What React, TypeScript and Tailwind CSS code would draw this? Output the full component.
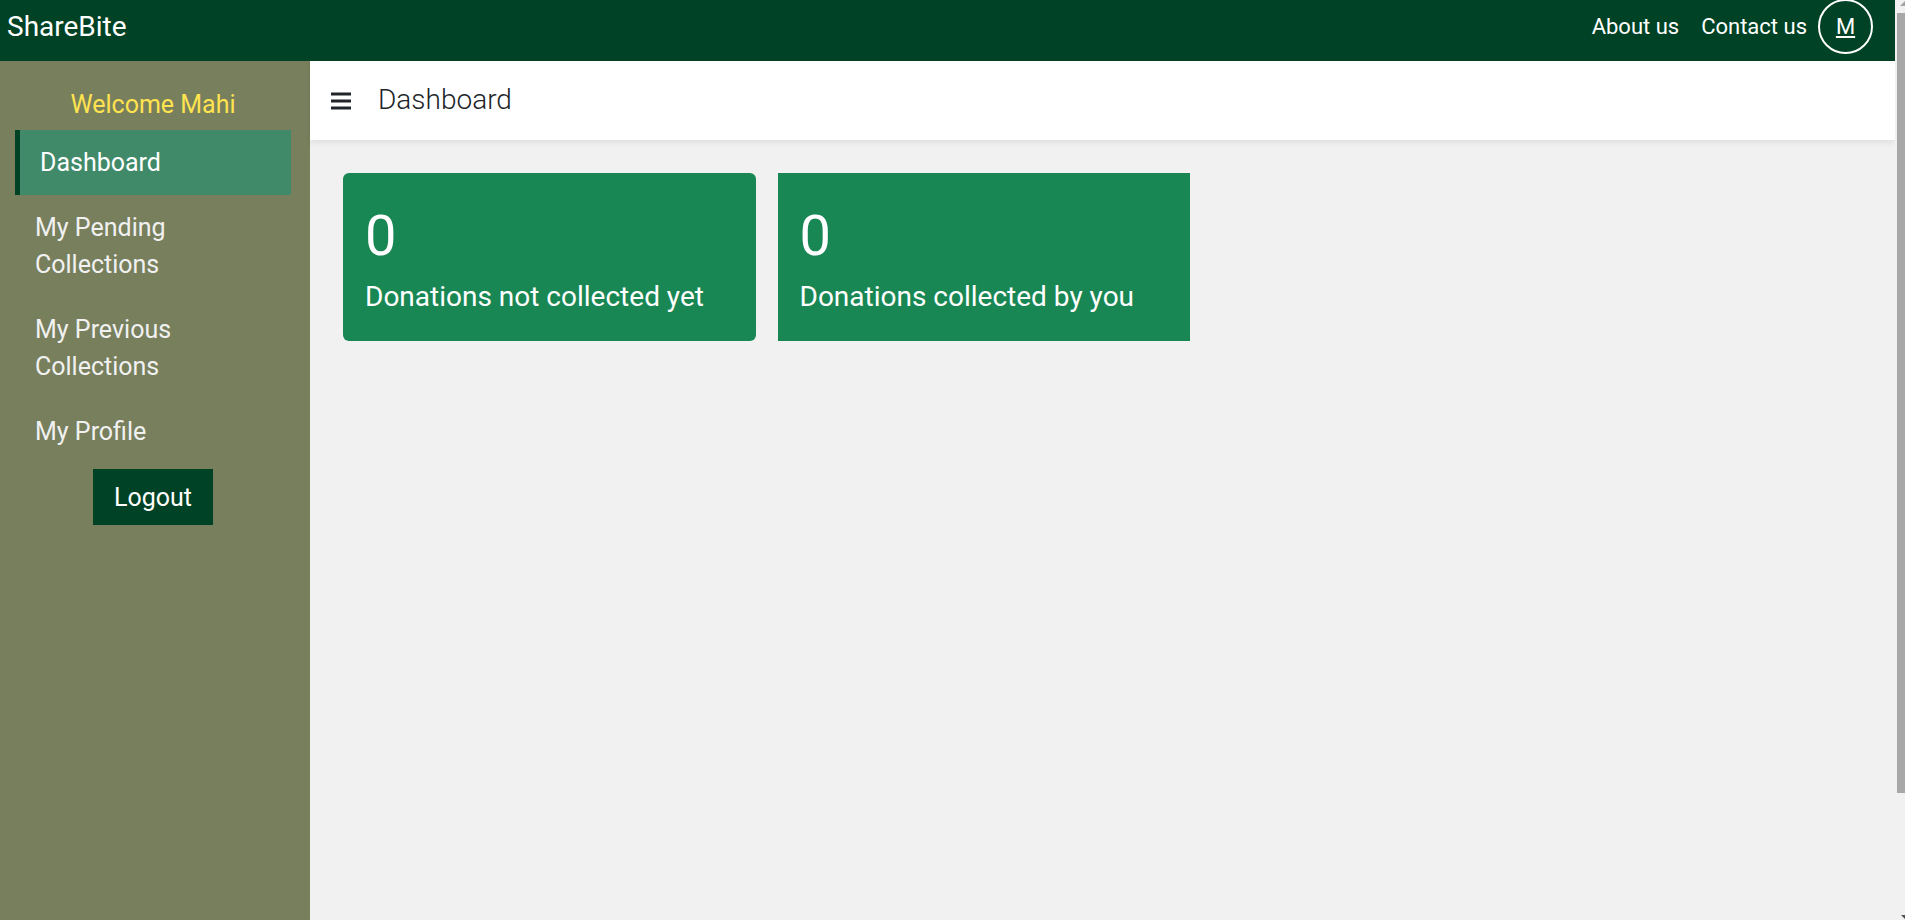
import React from "react";

const navItems = [
  { label: "Dashboard", active: true },
  { label: "My Pending Collections", active: false },
  { label: "My Previous Collections", active: false },
  { label: "My Profile", active: false },
];

const stats = [
  { value: 0, label: "Donations not collected yet", shape: "rounded-[6px]" },
  { value: 0, label: "Donations collected by you", shape: "rounded-none" },
];

function TopBar() {
  return (
    <header className="flex h-[61px] shrink-0 items-start justify-between bg-[#004225] pl-[7px] pr-[22px] text-white">
      <a href="#home" className="pt-[6px] text-[28px] leading-[42px]">
        ShareBite
      </a>
      <nav className="-mt-px flex items-center gap-[22px] text-[22px] leading-[34px]">
        <a href="#about">About us</a>
        <div className="flex items-center gap-[11px]">
          <a href="#contact">Contact us</a>
          <a
            href="#profile"
            className="flex size-[55px] items-center justify-center rounded-full border-2 border-white underline"
          >
            M
          </a>
        </div>
      </nav>
    </header>
  );
}

function Sidebar() {
  return (
    <aside className="w-[310px] shrink-0 bg-[#777f5d] pl-[15px] pr-[19px] pt-[25px] text-[25px] leading-[37px]">
      <p className="pb-[7px] text-center text-[#ffe34f]">Welcome Mahi</p>
      <nav>
        {navItems.map((item) => (
          <a
            key={item.label}
            href="#section"
            className={
              item.active
                ? "block border-l-[5px] border-[#004225] bg-[#408a6a] px-5 py-[14px] text-white"
                : "block px-5 py-[14px] text-[#f1f1f1]"
            }
          >
            <span className="block max-w-[200px]">{item.label}</span>
          </a>
        ))}
      </nav>
      <div className="flex justify-center pt-[5px]">
        <button type="button" className="h-14 bg-[#004225] px-[21px] text-white">
          Logout
        </button>
      </div>
    </aside>
  );
}

function ScrollTrack() {
  return (
    <div aria-hidden="true" className="flex w-[10px] shrink-0 flex-col overflow-hidden bg-[#f1f1f1] pl-[2px]">
      <svg className="h-[13px] w-2 shrink-0" viewBox="0 0 8 13">
        <path d="M3 6 L8 1 V6 Z" fill="#a3a3a3" />
      </svg>
      <div className="flex grow flex-col">
        <div className="grow-[780] bg-[#a8a8a8]" />
        <div className="grow-[121]" />
      </div>
      <svg className="h-[6px] w-2 shrink-0" viewBox="0 0 8 6">
        <path d="M4 1 H8 V5 Z" fill="#505050" />
      </svg>
    </div>
  );
}

export default function App() {
  return (
    <div className="flex min-h-screen font-['Roboto',sans-serif]">
      <div className="flex min-w-0 grow flex-col">
        <TopBar />
        <div className="flex grow">
          <Sidebar />
          <main className="min-w-0 grow bg-[#f1f1f1]">
            <div className="flex h-[79px] items-center bg-white pl-[21px] text-[#212529] shadow-[0_3px_6px_rgba(0,0,0,0.07)]">
              <button type="button" aria-label="Toggle menu" className="mr-[27px]">
                <svg className="h-[18px] w-5" viewBox="0 0 20 18" fill="currentColor">
                  <path d="M0 0.5h20v3H0zM0 7.5h20v3H0zM0 14.5h20v3H0z" />
                </svg>
              </button>
              <h1 className="pb-[2px] text-[28px] font-light leading-[34px]">Dashboard</h1>
            </div>
            <div className="p-[33px]">
              <div className="grid max-w-[847px] grid-cols-2 gap-[22px]">
                {stats.map((stat) => (
                  <section
                    key={stat.label}
                    className={`bg-[#198754] px-[22px] pb-[27px] pt-[29px] text-white ${stat.shape}`}
                  >
                    <p className="mb-[10px] text-[56px] leading-[68px]">{stat.value}</p>
                    <h2 className="text-[28px] leading-[34px]">{stat.label}</h2>
                  </section>
                ))}
              </div>
            </div>
          </main>
        </div>
      </div>
      <ScrollTrack />
    </div>
  );
}
